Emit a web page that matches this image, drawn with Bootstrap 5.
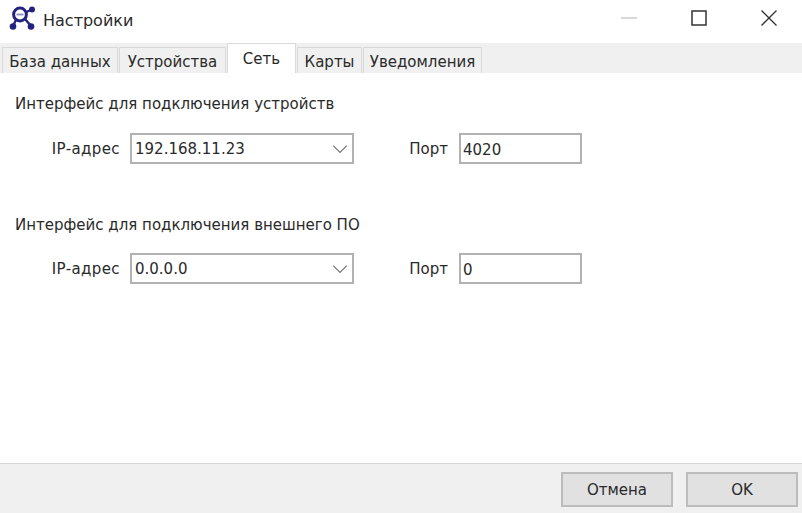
<!DOCTYPE html>
<html lang="ru">
<head>
<meta charset="utf-8">
<title>Настройки</title>
<link href="https://cdn.jsdelivr.net/npm/bootstrap@5.3.0/dist/css/bootstrap.min.css" rel="stylesheet">
<style>
html,body{height:100%;margin:0;overflow:hidden}
body{font-family:"DejaVu Sans","Noto Sans",sans-serif;font-size:15px;color:#2a2a2a;background:#fff}
.win{width:802px;height:513px}
.titlebar{height:43px;padding-left:9px}
.appicon{margin-top:-6px}
.titletext{font-size:16px;margin-left:8px;margin-top:-2px}
.winctls{margin-right:-2px}
.winctl{width:70px;height:30px;margin-top:-7px}
.tabstrip{background:#f0f0f0;height:30px;padding-left:2px;align-items:flex-end;border:0}
.tabstrip .nav-link{height:26px;padding:0;margin:0 1px 0 0;background:#f0f0f0;border:1px solid #d9d9d9;border-bottom:0;border-radius:0;color:#2a2a2a;font-size:15px;line-height:28px;text-align:center;transition:none}
.tabstrip .nav-link.active{height:30px;background:#fff;border-color:#d9d9d9;color:#2a2a2a;line-height:30px}
.tw1{width:116px}.tw2{width:107px}.tw3{width:69px;margin-right:1px!important}.tw4{width:65px}.tw5{width:119px}
.pane{height:391px;padding:20px 15px 0;border-bottom:1px solid #d6d6d6}
.grouptitle{line-height:22px;height:20px;margin:0}
.fieldrow{margin-top:20px;height:31px}
.fieldrow2{margin-top:19px}
.ipl{width:115px;text-align:right;margin:0;padding:2px 10px 0 0;letter-spacing:.4px}
.portl{width:105px;text-align:right;margin:0;padding:2px 11px 0 0}
.combo.form-select,.entry.form-control{height:31px;border:2px solid #b2b2b2;border-radius:0;font-size:15px;color:#2a2a2a;padding:2px 0 0 3px;box-shadow:none;min-height:0}
.entry.form-control{padding-left:2px}
.combo.form-select{width:224px;background-size:18px 12px;background-position:right 3px center;padding-right:24px;background-image:url("data:image/svg+xml,%3Csvg xmlns='http://www.w3.org/2000/svg' viewBox='0 0 16 10'%3E%3Cpath d='M2 2l6 6 6-6' fill='none' stroke='%23777' stroke-width='1.1'/%3E%3C/svg%3E")}
.entry.form-control{width:123px}
.group2{margin-top:50px}
.bottombar{height:49px;background:#f0f0f0;padding:8px 4px 0 0;gap:13px}
.dlgbtn.btn{width:112px;height:35px;background:#e1e1e1;border:2px solid #bcbcbc;border-radius:0;color:#2a2a2a;font-size:15px;padding:2px 0 0}
</style>
</head>
<body>
<div class="win d-flex flex-column">
  <div class="titlebar d-flex align-items-center">
    <svg class="appicon" width="26" height="25" viewBox="0 0 26 25" aria-hidden="true">
      <path d="M15 7 23 3.500M16 13l6 7M7 14l-3 6" fill="none" stroke="#23237f" stroke-width="2.400"/>
      <circle cx="11" cy="8.500" r="6.400" fill="#fff" stroke="#23237f" stroke-width="3"/>
      <path d="M7.500 8.500h7" stroke="#8a8ac0" stroke-width="1.800"/>
      <circle cx="23" cy="3.500" r="3" fill="#23237f"/>
      <circle cx="22" cy="20.500" r="3.300" fill="#23237f"/>
      <circle cx="4" cy="20.500" r="3.300" fill="#23237f"/>
    </svg>
    <span class="titletext">Настройки</span>
    <div class="d-flex ms-auto winctls">
      <div class="winctl d-flex align-items-center justify-content-center">
        <svg width="16" height="2"><path d="M0 1h16" stroke="#ccc" stroke-width="1.500"/></svg>
      </div>
      <div class="winctl d-flex align-items-center justify-content-center">
        <svg width="16" height="16"><rect x="1" y="1" width="14" height="14" fill="none" stroke="#333" stroke-width="1.500"/></svg>
      </div>
      <div class="winctl d-flex align-items-center justify-content-center">
        <svg width="16" height="16"><path d="M.5.500l15 15M15.500.500l-15 15" stroke="#333" stroke-width="1.300"/></svg>
      </div>
    </div>
  </div>
  <ul class="nav nav-tabs tabstrip">
    <li class="nav-item"><a class="nav-link tw1" href="#">База данных</a></li>
    <li class="nav-item"><a class="nav-link tw2" href="#">Устройства</a></li>
    <li class="nav-item"><a class="nav-link active tw3" href="#">Сеть</a></li>
    <li class="nav-item"><a class="nav-link tw4" href="#">Карты</a></li>
    <li class="nav-item"><a class="nav-link tw5" href="#">Уведомления</a></li>
  </ul>
  <div class="pane">
    <p class="grouptitle">Интерфейс для подключения устройств</p>
    <div class="fieldrow d-flex align-items-center">
      <label class="ipl">IP-адрес</label>
      <select class="form-select combo"><option>192.168.11.23</option></select>
      <label class="portl">Порт</label>
      <input class="form-control entry" value="4020">
    </div>
    <p class="grouptitle group2">Интерфейс для подключения внешнего ПО</p>
    <div class="fieldrow fieldrow2 d-flex align-items-center">
      <label class="ipl">IP-адрес</label>
      <select class="form-select combo"><option>0.0.0.0</option></select>
      <label class="portl">Порт</label>
      <input class="form-control entry" value="0">
    </div>
  </div>
  <div class="bottombar d-flex justify-content-end">
    <button type="button" class="btn dlgbtn">Отмена</button>
    <button type="button" class="btn dlgbtn">OK</button>
  </div>
</div>
<script src="https://cdn.jsdelivr.net/npm/bootstrap@5.3.0/dist/js/bootstrap.bundle.min.js"></script>
</body>
</html>
